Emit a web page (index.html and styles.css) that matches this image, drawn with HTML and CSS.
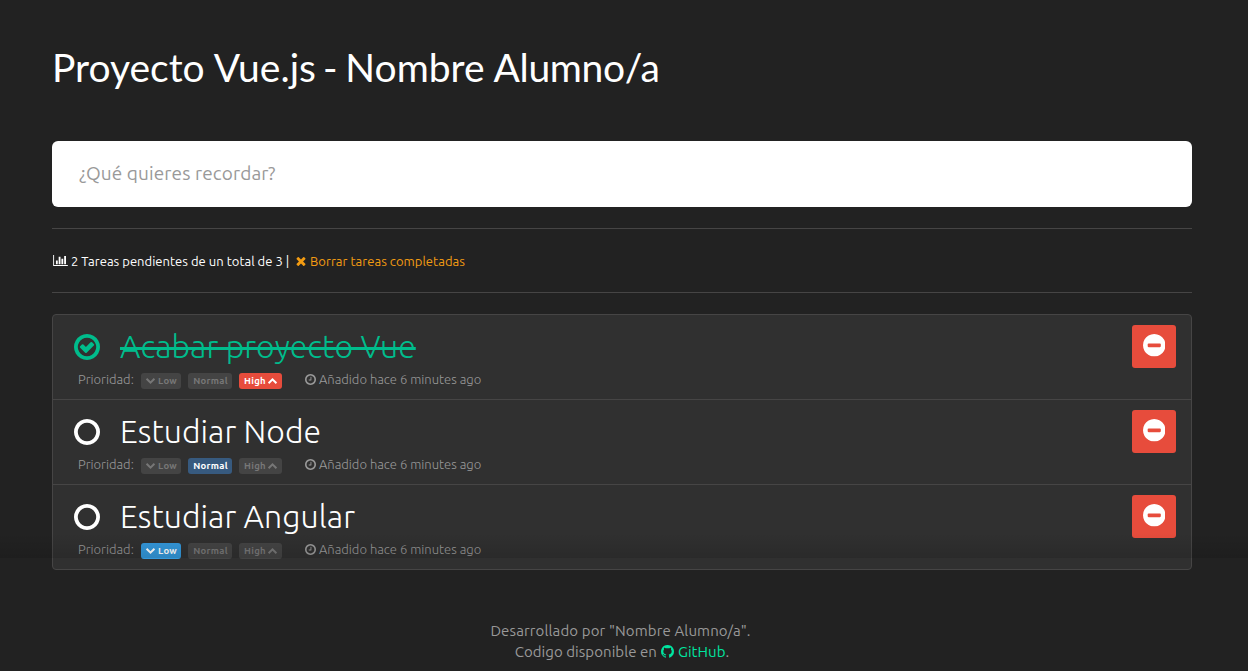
FILE: index.html
```html
<!DOCTYPE html>
<html lang="es">
<head>
<meta charset="utf-8">
<title>Proyecto Vue.js</title>
<link rel="stylesheet" href="styles.css">
</head>
<body>
<svg class="sprite" aria-hidden="true">
  <symbol id="circle" viewBox="128 128 1536 1536"><path d="M896 352q-148 0-273 73t-198 198-73 273 73 273 198 198 273 73 273-73 198-198 73-273-73-273-198-198-273-73zm768 544q0 209-103 385.5t-279.5 279.5-385.5 103-385.5-103-279.5-279.5-103-385.5 103-385.5 279.5-279.5 385.5-103 385.5 103 279.5 279.5 103 385.5z"/></symbol>
  <symbol id="check" viewBox="128 128 1536 1536"><path d="M1299 813l-422 422q-19 19-45 19t-45-19l-294-294q-19-19-19-45t19-45l102-102q19-19 45-19t45 19l147 147 275-275q19-19 45-19t45 19l102 102q19 19 19 45t-19 45zm141 83q0-148-73-273t-198-198-273-73-273 73-198 198-73 273 73 273 198 198 273 73 273-73 198-198 73-273zm224 0q0 209-103 385.5t-279.5 279.5-385.5 103-385.5-103-279.5-279.5-103-385.5 103-385.5 279.5-279.5 385.5-103 385.5 103 279.5 279.5 103 385.5z"/></symbol>
  <symbol id="minus" viewBox="128 128 1536 1536"><path d="M1344 960v-128q0-26-19-45t-45-19h-768q-26 0-45 19t-19 45v128q0 26 19 45t45 19h768q26 0 45-19t19-45zm320-64q0 209-103 385.5t-279.5 279.5-385.5 103-385.5-103-279.5-279.5-103-385.5 103-385.5 279.5-279.5 385.5-103 385.5 103 279.5 279.5 103 385.5z"/></symbol>
  <symbol id="clock" viewBox="128 128 1536 1536"><path d="M1024 544v448q0 14-9 23t-23 9h-320q-14 0-23-9t-9-23v-64q0-14 9-23t23-9h224v-352q0-14 9-23t23-9h64q14 0 23 9t9 23zm416 352q0-148-73-273t-198-198-273-73-273 73-198 198-73 273 73 273 198 198 273 73 273-73 198-198 73-273zm224 0q0 209-103 385.5t-279.5 279.5-385.5 103-385.5-103-279.5-279.5-103-385.5 103-385.5 279.5-279.5 385.5-103 385.5 103 279.5 279.5 103 385.5z"/></symbol>
  <symbol id="times" viewBox="302 366 1188 1188"><path d="M1490 1322q0 40-28 68l-136 136q-28 28-68 28t-68-28l-294-294-294 294q-28 28-68 28t-68-28l-136-136q-28-28-28-68t28-68l294-294-294-294q-28-28-28-68t28-68l136-136q28-28 68-28t68 28l294 294 294-294q28-28 68-28t68 28l136 136q28 28 28 68t-28 68l-294 294 294 294q28 28 28 68z"/></symbol>
  <symbol id="chart" viewBox="0 128 2048 1536"><path d="M640 896v512h-256v-512h256zm384-512v1024h-256v-1024h256zm1024 1152v128h-2048v-1536h128v1408h1920zm-640-896v768h-256v-768h256zm384-384v1152h-256v-1152h256z"/></symbol>
  <symbol id="down" viewBox="90 533 1612 1035"><path d="M1683 808l-742 741q-19 19-45 19t-45-19l-742-741q-19-19-19-45.5t19-45.5l166-165q19-19 45-19t45 19l531 531 531-531q19-19 45-19t45 19l166 165q19 19 19 45.5t-19 45.5z"/></symbol>
  <symbol id="up" viewBox="90 480 1612 1035"><path d="M1683 1331l-166 165q-19 19-45 19t-45-19l-531-531-531 531q-19 19-45 19t-45-19l-166-165q-19-19-19-45.5t19-45.5l742-741q19-19 45-19t45 19l742 741q19 19 19 45.5t-19 45.5z"/></symbol>
  <symbol id="github" viewBox="128 128 1536 1536"><path d="M896 128q209 0 385.5 103t279.5 279.5 103 385.5q0 251-146.500 451.500t-378.500 277.500q-27 5-40-7t-13-30q0-3 .5-76.500t.5-134.500q0-97-52-142 57-6 102.500-18t94-39 81-66.500 53-105 20.500-150.500q0-119-79-206 37-91-8-204-28-9-81 11t-92 44l-38 24q-93-26-192-26t-192 26q-16-11-42.500-27t-83.500-38.500-85-13.500q-45 113-8 204-79 87-79 206 0 85 20.500 150t52.500 105 80.500 67 94 39 102.500 18q-39 36-49 103-21 10-45 15t-57 5-65.500-21.500-55.500-62.500q-19-32-48.500-52t-49.500-24l-20-3q-21 0-29 4.500t-5 11.500 9 14 13 12l7 5q22 10 43.500 38t31.500 51l10 23q13 38 44 61.500t67 30 69.500 7 55.500-3.500l23-4q0 38 .5 88.500t.5 54.500q0 18-13 30t-40 7q-232-77-378.500-277.500t-146.500-451.500q0-209 103-385.500t279.500-279.500 385.500-103z"/></symbol>
</svg>

<main class="container">
  <h1 class="title">Proyecto <span class="title-vue">Vue.js</span> <span class="title-dash">-</span> Nombre <span class="title-last">Alumno/a</span></h1>
  <input class="new-task" type="text" placeholder="¿Qué quieres recordar?">
  <div class="stats">
    <svg class="icon icon-chart"><use href="#chart"/></svg>
    <span class="stats-text">2 Tareas pendientes de un total de 3 |</span>
    <a class="clear"><svg class="icon icon-times"><use href="#times"/></svg><span>Borrar tareas completadas</span></a>
  </div>

  <ul class="tasks">
    <li class="task done">
      <div class="task-head"><svg class="icon icon-state"><use href="#check"/></svg><span class="task-name">Acabar proyecto Vue</span></div>
      <div class="meta">
        <span class="priority">Prioridad:</span>
        <span class="badge low"><svg class="icon icon-chevron"><use href="#down"/></svg>Low</span>
        <span class="badge normal">Normal</span>
        <span class="badge high active">High<svg class="icon icon-chevron"><use href="#up"/></svg></span>
        <svg class="icon icon-clock"><use href="#clock"/></svg>
        <span class="added">Añadido hace 6 minutes ago</span>
      </div>
      <button class="remove"><svg class="icon icon-minus"><use href="#minus"/></svg></button>
    </li>
    <li class="task">
      <div class="task-head"><svg class="icon icon-state"><use href="#circle"/></svg><span class="task-name">Estudiar Node</span></div>
      <div class="meta">
        <span class="priority">Prioridad:</span>
        <span class="badge low"><svg class="icon icon-chevron"><use href="#down"/></svg>Low</span>
        <span class="badge normal active">Normal</span>
        <span class="badge high">High<svg class="icon icon-chevron"><use href="#up"/></svg></span>
        <svg class="icon icon-clock"><use href="#clock"/></svg>
        <span class="added">Añadido hace 6 minutes ago</span>
      </div>
      <button class="remove"><svg class="icon icon-minus"><use href="#minus"/></svg></button>
    </li>
    <li class="task">
      <div class="task-head"><svg class="icon icon-state"><use href="#circle"/></svg><span class="task-name">Estudiar Angular</span></div>
      <div class="meta">
        <span class="priority">Prioridad:</span>
        <span class="badge low active"><svg class="icon icon-chevron"><use href="#down"/></svg>Low</span>
        <span class="badge normal">Normal</span>
        <span class="badge high">High<svg class="icon icon-chevron"><use href="#up"/></svg></span>
        <svg class="icon icon-clock"><use href="#clock"/></svg>
        <span class="added">Añadido hace 6 minutes ago</span>
      </div>
      <button class="remove"><svg class="icon icon-minus"><use href="#minus"/></svg></button>
    </li>
  </ul>

  <footer class="footer">
    <div class="author">Desarrollado por "Nombre Alumno/a".</div>
    <div class="source"><span>Codigo disponible en</span><a class="github"><svg class="icon icon-github"><use href="#github"/></svg>GitHub</a><span>.</span></div>
  </footer>
</main>
<div class="fade"></div>
</body>
</html>
```
FILE: styles.css
```css
* { box-sizing: border-box; }
body {
  margin: 0;
  height: 671px;
  overflow: hidden;
  background: #222;
  color: #fff;
  font-family: Ubuntu, "Noto Sans", sans-serif;
  font-size: 15px;
}
.sprite { display: none; }
.icon { display: block; flex: none; fill: currentColor; }
.container { width: 1140px; margin-left: 52px; padding-top: 41px; }
.title {
  margin: 0 0 48px;
  height: 52px;
  font: 400 39px/52px Lato, sans-serif;
  white-space: nowrap;
}
.title-vue { margin-left: -1px; }
.title-dash { margin: 0 -2px 0 -3px; }
.title-last { margin-left: -1px; letter-spacing: -0.35px; }
.new-task {
  display: block;
  width: 100%;
  height: 66px;
  padding: 0 27px 2px;
  border: 0;
  border-radius: 6px;
  background: #fff;
  font: 400 19px Ubuntu, "Noto Sans", sans-serif;
  letter-spacing: 0.1px;
}
.new-task::placeholder { color: #999; opacity: 1; }
.stats {
  display: flex;
  align-items: center;
  height: 65px;
  margin: 21px 0;
  border: solid #464545;
  border-width: 1px 0;
  font-size: 13px;
  white-space: nowrap;
}
.icon-chart { width: 15px; height: 11px; margin: 0 3px 0 1px; }
.stats-text { width: 225px; letter-spacing: 0.02px; }
.clear { display: flex; align-items: center; gap: 4px; color: #f39c12; letter-spacing: 0.03px; }
.icon-times { width: 10px; height: 9px; margin-top: 1px; }
.tasks {
  margin: 0;
  padding: 0;
  list-style: none;
  border: 1px solid #464545;
  border-radius: 4px;
  background: #303030;
}
.task {
  display: grid;
  grid-template-columns: 1fr 44px;
  grid-template-rows: 46px 38px;
  height: 84px;
  padding: 0 15px 0 21px;
}
.task + .task { height: 85px; border-top: 1px solid #464545; }
.task-head { display: flex; align-items: flex-start; padding: 11px 0 0 0.3px; gap: 19.7px; }
.icon-state { width: 26px; height: 26px; margin-top: 8px; }
.task-name { font-size: 32px; font-weight: 300; line-height: 40px; letter-spacing: 0.05px; white-space: nowrap; }
.done .task-head { color: #00bc8c; }
.done .task-name { text-decoration: line-through; text-decoration-thickness: 3px; }
.meta {
  display: flex;
  grid-row: 2;
  grid-column: 1;
  height: 18px;
  margin-top: 9px;
  padding-left: 4px;
  align-items: center;
  color: #999;
  font-size: 13px;
  font-weight: 300;
  white-space: nowrap;
}
.priority { width: 63px; }
.badge {
  display: flex;
  align-items: center;
  justify-content: center;
  gap: 3px;
  height: 16px;
  margin: 3px 7px 0 0;
  border-radius: 3px;
  background: #444;
  color: #777;
  font-size: 9.5px;
  font-weight: 700;
  letter-spacing: 0.3px;
}
.low { width: 40px; padding-left: 1px; }
.normal { width: 44px; padding-left: 1px; }
.high { width: 43px; margin-right: 23px; gap: 2px; }
.active { color: #fff; }
.low.active { background: #3498db; }
.normal.active { background: #375a7f; }
.high.active { background: #e74c3c; }
.icon-chevron { width: 9px; height: 6px; }
.icon-clock { width: 11px; height: 11px; margin-right: 3px; }
.remove {
  display: flex;
  grid-column: 2;
  grid-row: 1 / 3;
  align-items: center;
  justify-content: center;
  width: 44px;
  height: 43px;
  margin: 10px 0 0;
  padding: 0 0 2px;
  border: 0;
  border-radius: 3px;
  background: #e74c3c;
  color: #fff;
}
.icon-minus { width: 22.5px; height: 22.5px; }
.footer { padding-top: 50px; color: #999; line-height: 21px; text-align: center; }
.author { letter-spacing: 0.12px; padding-right: 3px; }
.source { letter-spacing: 0.05px; }
.source, .github { display: flex; justify-content: center; align-items: center; }
.github { margin-left: 4px; gap: 4px; color: #00e5a0; }
.icon-github { width: 13px; height: 13px; }
.fade {
  position: absolute;
  left: 0;
  right: 0;
  top: 533px;
  height: 25px;
  background: linear-gradient(transparent, rgba(0, 0, 0, .12));
  pointer-events: none;
}
```
